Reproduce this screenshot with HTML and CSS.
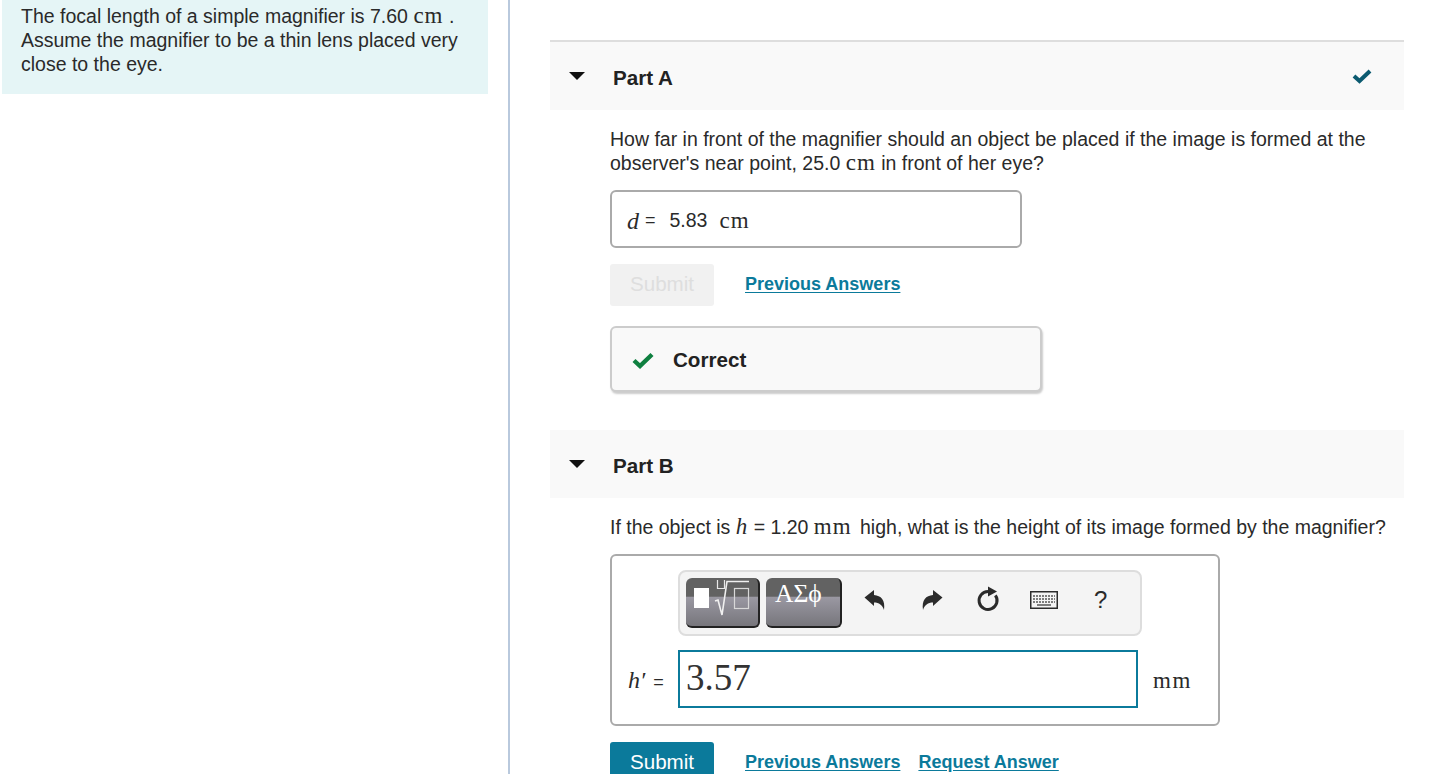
FILE: index.html
```html
<!DOCTYPE html>
<html lang="en">
<head>
    <meta charset="UTF-8">
    <meta name="viewport" content="width=device-width, initial-scale=1.0">
    <title>Simple Magnifier</title>
    <link rel="stylesheet" href="styles.css">
</head>
<body>
    <aside class="left-col">
        <div class="intro">
            The focal length of a simple magnifier is 7.60 <span class="math">cm</span> .
            Assume the magnifier to be a thin lens placed very close to the eye.
        </div>
    </aside>

    <main class="right-col">
        <section class="part part-a">
            <header class="part-head">
                <span class="caret"></span>
                <h2>Part A</h2>
                <svg class="part-check" width="20" height="16" viewBox="0 0 20 16"><path d="M2 8l5.500 5L18 3" fill="none" stroke="#0b5a70" stroke-width="4"/></svg>
            </header>
            <div class="part-body">
                <p class="question">How far in front of the magnifier should an object be placed if the image is formed at the observer's near point, 25.0 <span class="math">cm</span> in front of her eye?</p>
                <div class="answer-box">
                    <i class="math var">d</i><span class="eq">=</span><span class="value">5.83</span><span class="math unit">cm</span>
                </div>
                <div class="actions">
                    <button class="submit disabled" type="button">Submit</button>
                    <a href="#" class="link">Previous Answers</a>
                </div>
                <div class="correct">
                    <svg width="24" height="18" viewBox="0 0 24 18"><path d="M3 9.500l6 5.500L21 3.500" fill="none" stroke="#0f8040" stroke-width="4.400"/></svg>
                    <strong>Correct</strong>
                </div>
            </div>
        </section>

        <section class="part part-b">
            <header class="part-head">
                <span class="caret"></span>
                <h2>Part B</h2>
            </header>
            <div class="part-body">
                <p class="question">If the object is <i class="math">h</i> = 1.20 <span class="math math-mm">mm</span> high, what is the height of its image formed by the magnifier?</p>
                <div class="editor-box">
                    <div class="toolbar">
                        <button class="tool tool-templates" type="button" aria-label="Templates">
                            <svg width="74" height="50" viewBox="0 0 74 50">
                                <rect x="8" y="10" width="15" height="20" fill="#fff"/>
                                <path d="M31.500 2v8.500h7V2" fill="none" stroke="#e8e8e8" stroke-width="1.200"/>
                                <path d="M29 23l3-1 4 15 5-33.500h22" fill="none" stroke="#f0f0f0" stroke-width="1.600"/>
                                <rect x="48.500" y="10.500" width="14" height="20" fill="none" stroke="#d8d8d8" stroke-width="1.200"/>
                            </svg>
                        </button>
                        <button class="tool tool-greek" type="button">ΑΣϕ</button>
                        <div class="tool-icons">
                            <svg class="icon" width="24" height="24" viewBox="0 0 24 24"><path d="M1.500 9.500L11 2v5c7 .5 11.500 5 10 15-1.500-5-5-7.500-10-7.500V18z" fill="#2b2b2b"/></svg>
                            <svg class="icon" width="24" height="24" viewBox="0 0 24 24"><path d="M22.500 9.500L13 2v5c-7 .5-11.500 5-10 15 1.500-5 5-7.500 10-7.500V18z" fill="#2b2b2b"/></svg>
                            <svg class="icon" width="28" height="28" viewBox="0 0 28 28"><path d="M20.400 9.300A9 9 0 1 1 13 5.500" fill="none" stroke="#2b2b2b" stroke-width="3"/><path d="M13 .5l9 5-9 5z" fill="#2b2b2b"/></svg>
                            <svg class="icon" width="28" height="18" viewBox="0 0 28 18">
                                <rect x=".75" y=".75" width="26.500" height="16.500" fill="#f4f4f4" stroke="#2b2b2b" stroke-width="1.500"/>
                                <path d="M3 5h22M3 8h22M3 11h22" stroke="#555" stroke-width="1.500" stroke-dasharray="2 1"/>
                                <path d="M7 14h14" stroke="#555" stroke-width="1.500"/>
                            </svg>
                            <span class="help">?</span>
                        </div>
                    </div>
                    <div class="entry-row">
                        <span class="entry-label"><i class="math">h′</i> <span class="eq-b">=</span></span>
                        <div class="entry">3.57</div>
                        <span class="math entry-unit">mm</span>
                    </div>
                </div>
                <div class="actions actions-b">
                    <button class="submit" type="button">Submit</button>
                    <a href="#" class="link">Previous Answers</a>
                    <a href="#" class="link link-tight">Request Answer</a>
                </div>
            </div>
        </section>
    </main>
</body>
</html>
```

FILE: styles.css
```css
html, body {
    margin: 0;
    padding: 0;
    height: 100%;
    overflow: hidden;
    background-color: #ffffff;
    color: #2a2a2a;
    font-family: "Liberation Sans", Arial, sans-serif;
    font-size: 19.5px;
}

body {
    display: flex;
    height: 774px;
}

.math {
    font-family: "Liberation Serif", serif;
    line-height: 1;
}

.left-col {
    width: 510px;
    height: 100%;
    padding-left: 2px;
    box-sizing: border-box;
    border-right: 2px solid #b9c9dd;
    flex: none;
}

.intro {
    width: 486px;
    height: 94px;
    box-sizing: border-box;
    padding: 4px 20px 0 19px;
    background-color: #e5f5f6;
    line-height: 24px;
}

.intro .math,
.question .math {
    font-size: 23px;
    letter-spacing: 1px;
}

.question .math-mm {
    margin-right: 3px;
}

.right-col {
    width: 854px;
    margin-left: 40px;
    padding-top: 40px;
}

.part-head {
    height: 68px;
    box-sizing: border-box;
    padding: 4px 0 0 20px;
    display: flex;
    align-items: center;
    background-color: #f9f9f9;
}

.part-a .part-head {
    height: 70px;
    border-top: 2px solid #dedede;
}

.part-head h2 {
    margin: 0 0 0 28px;
    font-size: 20.6px;
    font-weight: bold;
    color: #222;
}

.caret {
    width: 0;
    height: 0;
    border-left: 8px solid transparent;
    border-right: 8px solid transparent;
    border-top: 8px solid #111;
    margin-bottom: 4px;
    margin-left: -1px;
    flex: none;
}

.part-check {
    margin-left: auto;
    margin-right: 32px;
    margin-bottom: 4px;
}

.part-body {
    padding: 17px 0 0 60px;
}

.question {
    margin: 0;
    line-height: 24px;
}

.answer-box {
    width: 412px;
    height: 58px;
    margin-top: 15px;
    box-sizing: border-box;
    border: 2px solid #aaaaaa;
    border-radius: 6px;
    display: flex;
    align-items: center;
    padding-left: 15px;
    padding-top: 3px;
}

.var {
    font-size: 24px;
}

.eq {
    margin-left: 6px;
    font-size: 18px;
}

.value {
    margin-left: 14px;
}

.unit {
    margin-left: 12px;
    font-size: 23px;
    letter-spacing: 1px;
}

.actions {
    display: flex;
    align-items: center;
    margin-top: 16px;
}

.submit {
    width: 104px;
    height: 42px;
    padding: 0 0 2px;
    border: none;
    border-radius: 3px;
    background-color: #0b7a9b;
    color: #ffffff;
    font-family: "Liberation Sans", Arial, sans-serif;
    font-size: 20.6px;
}

.submit.disabled {
    background-color: #f1f1f1;
    color: #dedede;
}

.link {
    margin-left: 31px;
    margin-bottom: 2px;
    color: #0b7a9b;
    font-size: 18px;
    font-weight: bold;
    text-decoration: underline;
    text-underline-offset: 2px;
}

.link-tight {
    margin-left: 18px;
}

.correct {
    width: 432px;
    height: 66px;
    margin-top: 20px;
    box-sizing: border-box;
    border: 2px solid #cccccc;
    border-radius: 6px;
    background-color: #f9f9f9;
    box-shadow: 1px 2px 2px #cccccc;
    display: flex;
    align-items: center;
    padding: 2px 0 0 19px;
    gap: 18px;
}

.correct strong {
    font-size: 20.6px;
    color: #222;
}

.part-b {
    margin-top: 38px;
}

.editor-box {
    width: 610px;
    height: 172px;
    margin-top: 15px;
    box-sizing: border-box;
    border: 2px solid #aaaaaa;
    border-radius: 6px;
    padding: 14px 0 0 66px;
}

.toolbar {
    width: 464px;
    height: 66px;
    box-sizing: border-box;
    border: 2px solid #dddddd;
    border-radius: 8px;
    background-color: #f4f4f4;
    display: flex;
    padding: 6px;
    gap: 6px;
}

.tool {
    height: 50px;
    padding: 0;
    border: none;
    border-bottom: 2px solid #222;
    border-right: 2px solid #222;
    border-radius: 6px;
    background: linear-gradient(#626262 0, #626262 38%, #9a98a2 40%, #77767c 100%);
    color: #ffffff;
    flex: none;
}

.tool svg {
    display: block;
}

.tool-templates {
    width: 74px;
}

.tool-greek {
    width: 76px;
    padding: 0 0 16px 9px;
    text-align: left;
    font-family: "Liberation Serif", serif;
    font-size: 25.5px;
    line-height: 1;
}

.tool-icons {
    display: flex;
    align-items: center;
    margin-left: 15px;
    margin-bottom: 6px;
}

.icon {
    display: block;
    flex: none;
}

.icon:nth-child(2) {
    margin-left: 33px;
}

.icon:nth-child(3) {
    margin-left: 31px;
}

.icon:nth-child(4) {
    margin-left: 27px;
}

.help {
    margin-left: 36px;
    font-size: 24px;
}

.entry-row {
    display: flex;
    align-items: center;
    margin-top: 14px;
    margin-left: -50px;
}

.entry-label {
    width: 50px;
    font-size: 18px;
    white-space: nowrap;
    padding-top: 2px;
}

.entry-label .math {
    font-size: 24px;
}

.eq-b {
    margin-left: 3px;
}

.entry {
    width: 460px;
    height: 58px;
    box-sizing: border-box;
    border: 2px solid #0b7a9b;
    padding-left: 6px;
    font-family: "Liberation Serif", serif;
    font-size: 37px;
    line-height: 52px;
    color: #333;
}

.entry-unit {
    margin-left: 15px;
    font-size: 23px;
    letter-spacing: 1.5px;
    padding-top: 2px;
}

.actions-b {
    margin-top: 16px;
}
```
